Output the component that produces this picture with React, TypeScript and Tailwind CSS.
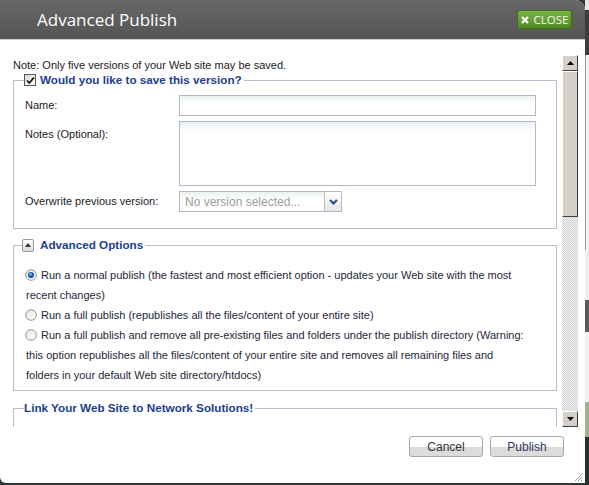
import React from "react";

const Legend = ({ children }: { children: React.ReactNode }) => (
  <legend className="-ml-[1px] pr-[2px]">
    <span className="flex h-[14px] items-center gap-[4px] text-[11.7px] font-bold text-[#1d3e91]">
      {children}
    </span>
  </legend>
);

const Radio = ({ checked }: { checked?: boolean }) => (
  <svg width="12" height="12" viewBox="0 0 12 12" className="shrink-0">
    <defs>
      <linearGradient id={checked ? "rg-on" : "rg-off"} x1="0" y1="0" x2="1" y2="1">
        <stop offset="0" stopColor="#e4e4e4" />
        <stop offset="1" stopColor="#ffffff" />
      </linearGradient>
    </defs>
    <circle cx="6" cy="6" r="5.3" fill={`url(#${checked ? "rg-on" : "rg-off"})`} stroke="#8c8c8c" strokeWidth="0.9" />
    {checked && (
      <>
        <circle cx="6" cy="6" r="3.1" fill="#1f5fae" />
        <circle cx="5.4" cy="5.3" r="1.3" fill="#7fb6ea" />
      </>
    )}
  </svg>
);

const ArrowBtn = ({ up }: { up?: boolean }) => (
  <div className="flex h-[16px] w-[16px] shrink-0 items-center justify-center border border-t-white border-l-white border-r-[#404040] border-b-[#404040] bg-[#d4d0c8]">
    <svg width="7" height="4" viewBox="0 0 7 4">
      <path d={up ? "M0 4 L3.5 0 L7 4 Z" : "M0 0 L3.5 4 L7 0 Z"} fill="#000" />
    </svg>
  </div>
);

const options = [
  {
    checked: true,
    lines: [
      "Run a normal publish (the fastest and most efficient option - updates your Web site with the most",
      "recent changes)",
    ],
  },
  {
    checked: false,
    lines: ["Run a full publish (republishes all the files/content of your entire site)"],
  },
  {
    checked: false,
    lines: [
      "Run a full publish and remove all pre-existing files and folders under the publish directory (Warning:",
      "this option republishes all the files/content of your entire site and removes all remaining files and",
      "folders in your default Web site directory/htdocs)",
    ],
  },
];

export default function App() {
  return (
    <div className="flex h-[485px] w-[589px] overflow-hidden bg-[#2e3a3a] font-['Liberation_Sans',Arial,sans-serif]">
      <div className="flex h-[483px] w-[585px] flex-col overflow-hidden rounded-tr-[10px] rounded-bl-[6px] bg-white">
        {/* title bar */}
        <div className="flex h-[40px] shrink-0 items-center border-b border-[#cfcfcf] bg-gradient-to-b from-[#676767] to-[#555555]">
          <div className="pt-[1px] pl-[37px] font-['Open_Sans',sans-serif] text-[17px] text-white">Advanced Publish</div>
          <button className="mr-[13px] ml-auto flex h-[19px] w-[55px] items-center justify-center gap-[5px] rounded-[3px] border border-[#3f6d1c] bg-gradient-to-b from-[#7bb548] to-[#4e8b21] font-['Open_Sans',sans-serif] text-[11.5px] leading-none text-[#f4f8ee]">
            <svg width="8" height="8" viewBox="0 0 8 8">
              <path d="M1 1 L7 7 M7 1 L1 7" stroke="#fff" strokeWidth="2.2" />
            </svg>
            CLOSE
          </button>
        </div>

        {/* scrolling body */}
        <div className="flex h-[387px] shrink-0 overflow-hidden">
          <div className="w-[562px] shrink-0 pt-[19px] pr-[5px] pl-[13px] text-[11px] text-[#222]">
            <div className="leading-[13px]">Note: Only five versions of your Web site may be saved.</div>

            <fieldset className="mt-[1px] border border-[#b9bccc] px-[11px] pb-[16px]">
              <Legend>
                <span className="flex h-[12px] w-[12px] items-center justify-center border border-[#555] bg-gradient-to-br from-[#dcdcdc] to-white">
                  <svg width="9" height="9" viewBox="0 0 9 9">
                    <path d="M1 4.5 L3.3 7 L8 1.5" stroke="#111" strokeWidth="1.8" fill="none" />
                  </svg>
                </span>
                Would you like to save this version?
              </Legend>

              <div className="mt-[8px] flex items-center">
                <label className="w-[154px]">Name:</label>
                <input
                  type="text"
                  className="h-[21px] w-[357px] border border-[#b5b8c8] bg-gradient-to-b from-[#eaf1f1] to-white to-40%"
                />
              </div>
              <div className="mt-[5px] flex items-start">
                <label className="w-[154px] pt-[5px]">Notes (Optional):</label>
                <textarea className="h-[65px] w-[357px] resize-none border border-[#b5b8c8] bg-gradient-to-b from-[#eaf1f1] to-white to-15%" />
              </div>
              <div className="mt-[5px] flex items-center">
                <label className="w-[154px]">Overwrite previous version:</label>
                <div className="flex h-[21px] w-[163px] border border-[#b5b8c8]">
                  <div className="flex flex-1 items-center bg-gradient-to-b from-[#eaf1f1] to-white to-40% pl-[5px] text-[12px] text-[#9c9c9c]">
                    No version selected...
                  </div>
                  <div className="flex w-[17px] items-center justify-center border-l border-[#b5b8c8] bg-gradient-to-b from-white to-[#e6e6e6]">
                    <svg width="9" height="6" viewBox="0 0 9 6">
                      <path d="M1 1 L4.5 4.5 L8 1" stroke="#2b4a8c" strokeWidth="2" fill="none" />
                    </svg>
                  </div>
                </div>
              </div>
            </fieldset>

            <fieldset className="mt-[9px] border border-[#b9bccc] px-[11px] pb-[5px]">
              <Legend>
                <span className="-ml-[2px] mr-[2px] flex h-[13px] w-[12px] items-center justify-center rounded-[2px] border border-[#9a9a9a] bg-gradient-to-b from-white to-[#dadada]">
                  <svg width="6" height="4" viewBox="0 0 6 4">
                    <path d="M0 4 L3 0 L6 4 Z" fill="#333" />
                  </svg>
                </span>
                Advanced Options
              </Legend>
              <div className="mt-[13px] flex flex-col text-[#262638]">
                {options.map((o, i) => (
                  <div key={i} className="flex items-start gap-[4px] leading-[20px]">
                    <span className="flex h-[20px] items-center">
                      <Radio checked={o.checked} />
                    </span>
                    <div className="whitespace-nowrap">
                      {o.lines.map((l, j) => (
                        <div key={j} className={j > 0 ? "-ml-[15px]" : ""}>
                          {l}
                        </div>
                      ))}
                    </div>
                  </div>
                ))}
              </div>
            </fieldset>

            <fieldset className="mt-[10px] border border-[#b9bccc] px-[11px]">
              <legend className="-ml-[1px] pr-[2px]">
                <span className="flex h-[14px] items-center text-[11.7px] font-bold text-[#1d3e91]">
                  Link Your Web Site to Network Solutions!
                </span>
              </legend>
              <div className="mt-[8px] leading-[20px] whitespace-nowrap text-[#26265a]">
                If you have a domain name registered with Network Solutions, you can link it to your Web site here.
              </div>
            </fieldset>
          </div>

          {/* scrollbar */}
          <div className="mt-[15px] flex h-[372px] w-[16px] shrink-0 flex-col">
            <ArrowBtn up />
            <div className="h-[146px] shrink-0 border border-t-white border-l-white border-r-[#404040] border-b-[#404040] bg-[#d4d0c8]" />
            <div className="flex-1 bg-[repeating-conic-gradient(#cfcfcf_0_25%,#f6f6f6_0_50%)] bg-[length:2px_2px]" />
            <ArrowBtn />
          </div>
        </div>

        {/* footer */}
        <div className="relative flex flex-1 justify-end gap-[7px] pt-[9px] pr-[21px]">
          <button className="h-[21px] w-[74px] rounded-[3px] border border-[#a8a8a8] bg-gradient-to-b from-white from-50% to-[#dcdcdc] to-50% text-[12px] text-[#333]">
            Cancel
          </button>
          <button className="h-[21px] w-[74px] rounded-[3px] border border-[#a8a8a8] bg-gradient-to-b from-white from-50% to-[#dcdcdc] to-50% text-[12px] text-[#333366]">
            Publish
          </button>
          <svg width="10" height="10" viewBox="0 0 10 10" className="absolute right-[2px] bottom-[1px]">
            <path d="M9 2 L2 9 M9 5 L5 9 M9 8 L8 9" stroke="#9a9a9a" strokeWidth="1" />
          </svg>
        </div>
      </div>

      {/* background peeking on the right */}
      <div className="flex w-[4px] flex-col">
        <div className="h-[10px] bg-[#e8e8e8]" />
        <div className="h-[45px] bg-[#3c3c3c]" />
        <div className="h-[195px] border-l border-[#9a9a9a] bg-[#f4f4f4]" />
        <div className="h-[50px] bg-[#eeeeee]" />
        <div className="h-[32px] bg-[#5a5a5a]" />
        <div className="h-[70px] bg-[#f2f2f2]" />
        <div className="h-[35px] bg-[#9fb08a]" />
        <div className="flex-1 bg-[#24322f]" />
      </div>
    </div>
  );
}
